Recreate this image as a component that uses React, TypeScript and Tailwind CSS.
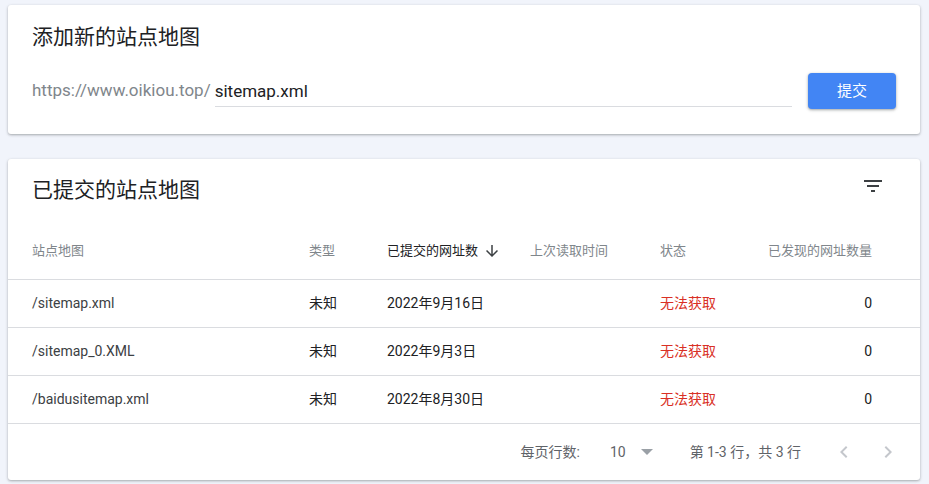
import React from "react";

const CJK = "font-['Roboto','Noto_Sans_CJK_SC',sans-serif]";

function FilterIcon() {
  return (
    <svg width="24" height="24" viewBox="0 0 24 24" fill="#3c4043">
      <path d="M10 18h4v-2h-4v2zM3 6v2h18V6H3zm3 7h12v-2H6v2z" />
    </svg>
  );
}

function ArrowDown() {
  return (
    <svg width="18" height="18" viewBox="0 0 24 24" fill="#3c4043">
      <path d="M20 12l-1.41-1.41L13 16.17V4h-2v12.17l-5.58-5.59L4 12l8 8 8-8z" />
    </svg>
  );
}

function ChevronLeft() {
  return (
    <svg width="24" height="24" viewBox="0 0 24 24" fill="#c4c7cc">
      <path d="M15.41 7.41L14 6l-6 6 6 6 1.41-1.41L10.83 12z" />
    </svg>
  );
}

function ChevronRight() {
  return (
    <svg width="24" height="24" viewBox="0 0 24 24" fill="#c4c7cc">
      <path d="M10 6L8.59 7.41 13.17 12l-4.58 4.59L10 18l6-6z" />
    </svg>
  );
}

const rows = [
  { path: "/sitemap.xml", date: "2022年9月16日" },
  { path: "/sitemap_0.XML", date: "2022年9月3日" },
  { path: "/baidusitemap.xml", date: "2022年8月30日" },
];

const grid = "grid grid-cols-[277px_78px_143px_130px_1fr_auto] items-center pl-6 pr-12";

export default function App() {
  return (
    <div className={`min-h-[484px] bg-[#f1f4fb] pl-2 pr-[9px] pt-[5px] pb-1 ${CJK}`}>
      <div className="bg-white rounded-[3px] shadow-[0_1px_3px_rgba(60,64,67,0.3),0_1px_2px_rgba(60,64,67,0.15)] pl-6 pr-6 pt-[18px] pb-[25px]">
        <div className="text-[21px] leading-7 text-[#202124]">添加新的站点地图</div>
        <div className="mt-[22px] flex items-start h-9">
          <div className="flex flex-1 items-center h-[34px] pt-[2px]">
            <span className="text-[17px] text-[#80868b] mr-[4px] font-['Roboto',sans-serif]">
              https://www.oikiou.top/
            </span>
            <div className="flex-1 h-[32px] pt-[3px] flex items-center border-b border-[#dadce0] text-[17px] text-[#202124] font-['Roboto',sans-serif]">
              sitemap.xml
            </div>
          </div>
          <button className="ml-4 w-[88px] h-9 rounded-[4px] bg-[#4285f4] text-white text-[15px] shadow-[0_1px_2px_rgba(60,64,67,0.3),0_1px_3px_1px_rgba(60,64,67,0.15)]">
            提交
          </button>
        </div>
      </div>

      <div className="mt-[25px] bg-white rounded-[3px] shadow-[0_1px_3px_rgba(60,64,67,0.3),0_1px_2px_rgba(60,64,67,0.15)]">
        <div className="flex items-center justify-between pl-6 pr-[35px] pt-[17px]">
          <div className="text-[21px] leading-7 text-[#202124]">已提交的站点地图</div>
          <div className="-mt-2">
            <FilterIcon />
          </div>
        </div>
        <div className={`${grid} mt-[18px] h-[58px] border-b border-[#dadce0] text-[13px] text-[#80868b]`}>
          <div>站点地图</div>
          <div>类型</div>
          <div className="flex items-center text-[#202124]">
            <span>已提交的网址数</span>
            <span className="ml-[5px] mt-[1px]">
              <ArrowDown />
            </span>
          </div>
          <div>上次读取时间</div>
          <div>状态</div>
          <div className="text-right">已发现的网址数量</div>
        </div>
        {rows.map((r) => (
          <div key={r.path} className={`${grid} h-12 border-b border-[#dadce0] text-[14px] text-[#202124]`}>
            <div className="text-[#3c4043]">{r.path}</div>
            <div>未知</div>
            <div>{r.date}</div>
            <div></div>
            <div className="text-[#d93025]">无法获取</div>
            <div className="text-right">0</div>
          </div>
        ))}
        <div className="h-14 flex items-center justify-end pr-5 text-[14px] text-[#5f6368]">
          <span>每页行数:</span>
          <span className="ml-[30px]">10</span>
          <span className="ml-[15px] w-0 h-0 border-l-[6px] border-r-[6px] border-t-[6px] border-l-transparent border-r-transparent border-t-[#9aa0a6]"></span>
          <span className="ml-[37px]">第 1-3 行，共 3 行</span>
          <span className="ml-[31px]">
            <ChevronLeft />
          </span>
          <span className="ml-5">
            <ChevronRight />
          </span>
        </div>
      </div>
    </div>
  );
}
